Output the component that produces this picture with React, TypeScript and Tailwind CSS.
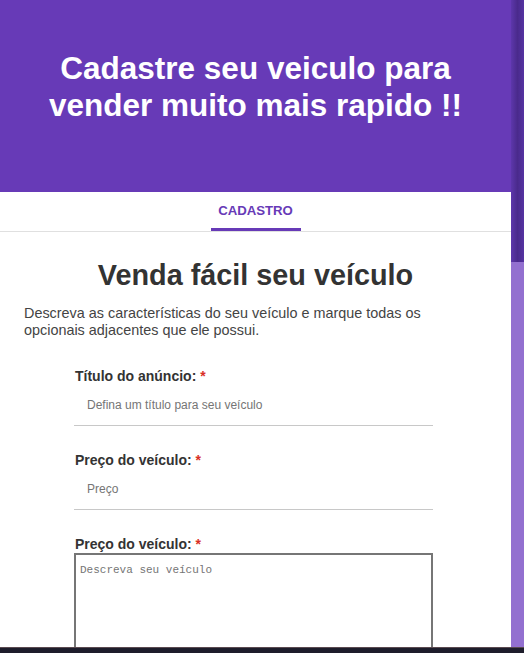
import React from "react";

const sans = "font-['Liberation_Sans',Arial,sans-serif]";

function Field({ label, placeholder }: { label: string; placeholder: string }) {
  return (
    <div className="flex flex-col">
      <label className="pl-px text-[14px] leading-[16px] font-bold text-[#333]">
        {label} <span className="text-[#d93025]">*</span>
      </label>
      <input
        type="text"
        placeholder={placeholder}
        className="h-[42px] w-full border-b border-[#c8c8c8] bg-transparent pl-[13px] text-[12px] text-[#333] outline-none placeholder:text-[#757575]"
      />
    </div>
  );
}

export default function App() {
  return (
    <div className={`flex h-[653px] w-full flex-col overflow-hidden bg-white ${sans}`}>
      <div className="flex min-h-0 flex-1">
        <main className="min-w-0 flex-1 overflow-hidden bg-white">
          {/* Banner */}
          <header className="h-[192px] bg-[#673ab7] pt-[50px]">
            <h1 className="text-center text-[31.5px] leading-[37px] font-bold text-white">
              Cadastre seu veiculo para
              <br />
              vender muito mais rapido !!
            </h1>
          </header>

          {/* Tabs */}
          <nav className="flex h-[40px] justify-center border-b border-[#e0e0e0]">
            <button className="flex w-[90px] items-center justify-center border-b-[3px] border-[#673ab7] pt-[2px] text-[13.2px] font-bold text-[#673ab7]">
              CADASTRO
            </button>
          </nav>

          <section className="pt-[26px]">
            <h2 className="text-center text-[28.8px] leading-[34px] font-bold text-[#333]">
              Venda fácil seu veículo
            </h2>
            <p className="mt-[13px] pl-[24px] pr-[70px] text-[14.4px] leading-[16.5px] text-[#444]">
              Descreva as características do seu veículo e marque todas os opcionais adjacentes que ele
              possui.
            </p>

            <form className="ml-[74px] mt-[30px] flex w-[359px] flex-col gap-[26px]">
              <Field label="Título do anúncio:" placeholder="Defina um título para seu veículo" />
              <Field label="Preço do veículo:" placeholder="Preço" />
              <div className="flex flex-col">
                <label className="mb-px pl-px text-[14px] leading-[16px] font-bold text-[#333]">
                  Preço do veículo: <span className="text-[#d93025]">*</span>
                </label>
                <textarea
                  placeholder="Descreva seu veículo"
                  className="h-[130px] w-full resize-none border-2 border-[#767676] bg-white px-[4px] pt-[7px] font-['Liberation_Mono',monospace] text-[11px] text-[#333] outline-none placeholder:text-[#757575]"
                />
              </div>
            </form>
          </section>
        </main>

        {/* Scrollbar */}
        <div className="flex w-[13px] flex-col">
          <div className="h-[262px] bg-gradient-to-r from-[#5d37ab] via-[#4a2a8c] to-[#5533a2]" />
          <div className="flex-1 bg-[#9370d0]" />
        </div>
      </div>
      <div className="h-[6px] border-t border-[#5b4a50] bg-[#1e1d2b]" />
    </div>
  );
}
